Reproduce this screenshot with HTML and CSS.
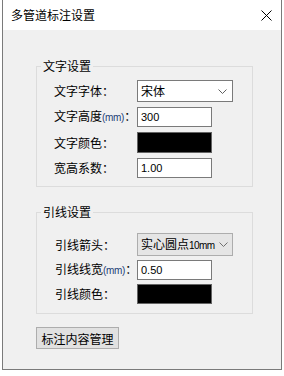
FILE: index.html
```html
<!DOCTYPE html>
<html lang="zh">
<head>
<meta charset="utf-8">
<title>多管道标注设置</title>
<link rel="stylesheet" href="styles.css">
</head>
<body>
<div class="window">
  <div class="titlebar">
    <span class="title">多管道标注设置</span>
    <svg class="close" width="11" height="11" viewBox="0 0 11 11"><path d="M0.5 0.5 L10.5 10.5 M10.5 0.5 L0.5 10.5" stroke="#000" stroke-width="1" fill="none"/></svg>
  </div>
  <div class="content">
    <fieldset class="group group-text">
      <legend>文字设置</legend>
      <div class="rows">
        <div class="row">
          <span class="label">文字字体：</span>
          <div class="select"><span class="val">宋体</span><svg class="chev" width="9" height="5" viewBox="0 0 9 5"><path d="M0.5 0.5 L4.5 4.5 L8.5 0.5" stroke="#606060" fill="none"/></svg></div>
        </div>
        <div class="row">
          <span class="label">文字高度<span class="unit">(mm)</span>：</span>
          <div class="field">300</div>
        </div>
        <div class="row">
          <span class="label">文字颜色：</span>
          <div class="swatch"></div>
        </div>
        <div class="row">
          <span class="label">宽高系数：</span>
          <div class="field">1.00</div>
        </div>
      </div>
    </fieldset>
    <fieldset class="group group-lead">
      <legend>引线设置</legend>
      <div class="rows">
        <div class="row">
          <span class="label">引线箭头：</span>
          <div class="select select-gray"><span class="val">实心圆点<span class="small">10mm</span></span><svg class="chev" width="9" height="5" viewBox="0 0 9 5"><path d="M0.5 0.5 L4.5 4.5 L8.5 0.5" stroke="#707070" fill="none"/></svg></div>
        </div>
        <div class="row">
          <span class="label">引线线宽<span class="unit">(mm)</span>：</span>
          <div class="field">0.50</div>
        </div>
        <div class="row row-color">
          <span class="label">引线颜色：</span>
          <div class="swatch"></div>
        </div>
      </div>
    </fieldset>
    <button class="btn" type="button">标注内容管理</button>
  </div>
</div>
</body>
</html>
```

FILE: styles.css
```css
html, body {
  margin: 0;
  padding: 0;
}
body {
  width: 284px;
  height: 376px;
  overflow: hidden;
  background: #ffffff;
  font-family: "Noto Sans CJK SC", "Noto Sans", sans-serif;
  font-size: 12px;
  color: #000;
}
.window {
  margin-left: 2px;
  width: 280px;
  height: 370px;
  box-sizing: border-box;
  border: 1px solid #7a7a7a;
  border-top: none;
  background: #f0f0f0;
  display: flex;
  flex-direction: column;
}
.titlebar {
  height: 30px;
  flex: none;
  background: #ffffff;
  display: flex;
  align-items: center;
  justify-content: space-between;
  padding: 0 9px 0 8px;
}
.title {
  font-size: 12px;
  line-height: 16px;
}
.close {
  display: block;
}
.content {
  padding: 28px 0 0 33px;
  display: flex;
  flex-direction: column;
  align-items: flex-start;
}
.group {
  margin: 0;
  padding: 0;
  width: 217px;
  box-sizing: border-box;
  border: 1px solid #dcdcdc;
  min-inline-size: 0;
}
.group legend {
  padding: 0 2px;
  margin-left: 4px;
  font-size: 12px;
  line-height: 16px;
}
.group-lead {
  margin-top: 17px;
}
.rows {
  display: flex;
  flex-direction: column;
  padding: 6px 0 8px 17px;
}
.group-lead .rows {
  padding: 13px 0 9px 18px;
}
.row {
  display: flex;
  align-items: center;
}
.group-text .row + .row {
  margin-top: 5px;
}
.group-lead .row + .row {
  margin-top: 4px;
}
.group-lead .row-color {
  margin-top: 7px;
}
.label {
  width: 83px;
  flex: none;
  white-space: nowrap;
  line-height: 16px;
}
.group-lead .label {
  width: 82px;
}
.unit {
  font-family: "Liberation Sans", sans-serif;
  font-size: 10px;
  color: #1d3f78;
  letter-spacing: -0.3px;
}
.select {
  width: 96px;
  height: 22px;
  box-sizing: border-box;
  border: 1px solid #7a7a7a;
  background: #ffffff;
  display: flex;
  align-items: center;
  justify-content: space-between;
  padding: 0 5px 0 3px;
}
.select-gray {
  height: 23px;
  background: #e5e5e5;
  border-color: #adadad;
  padding-right: 4px;
}
.select .val {
  white-space: nowrap;
  line-height: 16px;
}
.small {
  font-family: "Liberation Sans", sans-serif;
  font-size: 10px;
  letter-spacing: -0.6px;
}
.chev {
  flex: none;
  display: block;
}
.field {
  width: 75px;
  height: 20px;
  box-sizing: border-box;
  border: 1px solid #7a7a7a;
  background: #ffffff;
  display: flex;
  align-items: center;
  padding-left: 3px;
  font-family: "Liberation Sans", sans-serif;
  font-size: 11px;
}
.swatch {
  width: 75px;
  height: 20px;
  box-sizing: border-box;
  border: 1px solid #646464;
  background: #000000;
}
.group-text .swatch {
  height: 21px;
}
.btn {
  margin-top: 13px;
  width: 83px;
  height: 22px;
  box-sizing: border-box;
  border: 1px solid #adadad;
  background: #e1e1e1;
  padding: 0;
  font-family: "Noto Sans CJK SC", sans-serif;
  font-size: 12px;
  color: #000;
  border-radius: 0;
}
```
